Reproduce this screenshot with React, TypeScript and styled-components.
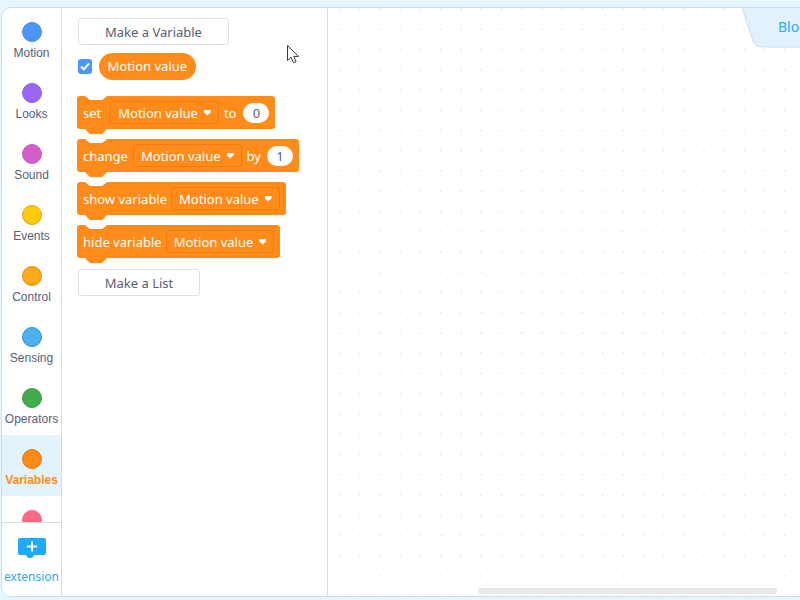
import React from "react";
import styled, { createGlobalStyle } from "styled-components";

const categories = [
  { name: "Motion", color: "#4c97f5", edge: "#4a90e8" },
  { name: "Looks", color: "#9966f5", edge: "#8f60e8" },
  { name: "Sound", color: "#cf5fcb", edge: "#c65ac2" },
  { name: "Events", color: "#ffcc0d", edge: "#ea9f0a" },
  { name: "Control", color: "#ffab19", edge: "#e8870f" },
  { name: "Sensing", color: "#4cb0ec", edge: "#2e93c9" },
  { name: "Operators", color: "#40ab4f", edge: "#389a40" },
  { name: "Variables", color: "#ff8c1a", edge: "#e6780f", active: true },
  { name: "My Blocks", color: "#ff6680", edge: "#ff6680" }
];

const GlobalStyle = createGlobalStyle`
  html, body {
    margin: 0;
    height: 100%;
    overflow: hidden;
    background: #e6f6fe;
    font-family: "Noto Sans", "Liberation Sans", sans-serif;
  }
`;

const Page = styled.div`
  width: 800px;
  height: 600px;
  overflow: hidden;
  padding: 7px 0 3px 1px;
  box-sizing: border-box;
`;

const Frame = styled.div`
  position: relative;
  display: flex;
  width: 820px;
  height: 590px;
  box-sizing: border-box;
  background: #fff;
  border: 1px solid #c5dff5;
  border-radius: 10px;
  overflow: hidden;
`;

const Sidebar = styled.aside`
  width: 59px;
  flex: none;
  display: flex;
  flex-direction: column;
  border-right: 1px solid #c5dff5;
`;

const CategoryList = styled.div`
  flex: 1;
  min-height: 0;
  overflow: hidden;
`;

const Category = styled.div<{ $active?: boolean }>`
  height: 61px;
  box-sizing: border-box;
  padding-top: 14px;
  display: flex;
  flex-direction: column;
  align-items: center;
  background: ${p => (p.$active ? "#e3f3fc" : "transparent")};
`;

const Dot = styled.span<{ $color: string; $edge: string }>`
  width: 20px;
  height: 20px;
  flex: none;
  box-sizing: border-box;
  border-radius: 50%;
  background: ${p => p.$color};
  border: 1px solid ${p => p.$edge};
`;

const CategoryName = styled.span<{ $active?: boolean }>`
  margin-top: 4px;
  font-family: "Liberation Sans", Arial, sans-serif;
  font-size: 12px;
  line-height: 14px;
  white-space: nowrap;
  color: ${p => (p.$active ? "#ff8c1a" : "#575e75")};
  font-weight: ${p => (p.$active ? "bold" : "normal")};
`;

const Extension = styled.div`
  height: 74px;
  flex: none;
  box-sizing: border-box;
  border-top: 1px solid #dddddd;
  padding-top: 15px;
  display: flex;
  flex-direction: column;
  align-items: center;
  background: #fff;
`;

const ExtensionName = styled.span`
  margin-top: 12px;
  font-size: 12px;
  line-height: 14px;
  color: #2ea8f5;
`;

const Flyout = styled.section`
  width: 266px;
  flex: none;
  box-sizing: border-box;
  padding: 10px 0 0 15px;
  border-right: 1px solid #c5dff5;
  display: flex;
  flex-direction: column;
  align-items: flex-start;
  background-image: radial-gradient(circle at 1px 1px, #fafafa 1px, transparent 1.2px);
  background-size: 20.25px 20.25px;
  background-position: 13.25px 0;
`;

const MakeButton = styled.div<{ $width: number }>`
  width: ${p => p.$width}px;
  height: 27px;
  margin-left: 1px;
  box-sizing: border-box;
  border: 1px solid #dddfe6;
  border-radius: 3px;
  background: #fff;
  color: #575e75;
  font-size: 13px;
  line-height: 26px;
  text-align: center;
`;

const ReporterRow = styled.div`
  display: flex;
  align-items: center;
  gap: 7px;
  margin: 8px 0 16px 1px;
`;

const Checkbox = styled.span`
  width: 14px;
  height: 15px;
  border-radius: 3px;
  background: #4c97ff;
  display: flex;
  align-items: center;
  justify-content: center;
`;

const Reporter = styled.div`
  height: 27px;
  padding: 0 8.5px;
  border-radius: 14px;
  background: #ff8c1a;
  color: #fff;
  font-size: 13px;
  line-height: 27px;
`;

const Stack = styled.div`
  display: flex;
  flex-direction: column;
  align-items: flex-start;
  gap: 10px;
  margin-bottom: 11px;
`;

const Block = styled.div`
  position: relative;
  height: 33px;
  box-sizing: border-box;
  padding: 0 6px;
  display: flex;
  align-items: center;
  gap: 5px;
  background: #ff8c1a;
  border-radius: 3px;
  color: #fff;
  font-size: 13px;
  white-space: nowrap;

  &::before {
    content: "";
    position: absolute;
    top: 0;
    left: 8px;
    width: 22px;
    height: 4px;
    background: #fff;
    clip-path: polygon(0 0, 100% 0, 78% 100%, 22% 100%);
  }

  &::after {
    content: "";
    position: absolute;
    top: 100%;
    left: 8px;
    width: 22px;
    height: 5px;
    background: #ff8c1a;
    clip-path: polygon(0 0, 100% 0, 78% 100%, 22% 100%);
  }
`;

const Word = styled.span<{ $after?: number }>`
  margin-right: ${p => p.$after ?? 0}px;
`;

const Dropdown = styled.span`
  height: 23px;
  box-sizing: border-box;
  padding: 0 7px;
  display: flex;
  align-items: center;
  gap: 6px;
  border: 1px solid #ed7d0e;
  border-radius: 3px;
`;

const Caret = styled.span`
  width: 7px;
  height: 6px;
  background: #fff;
  clip-path: polygon(0 12%, 25% 0, 50% 12%, 75% 0, 100% 12%, 100% 45%, 50% 100%, 0 45%);
`;

const NumberInput = styled.span`
  width: 26px;
  height: 20px;
  margin-left: 1px;
  border-radius: 10px;
  background: #fff;
  color: #575e75;
  font-size: 13px;
  line-height: 20px;
  text-align: center;
`;

const Workspace = styled.main`
  position: relative;
  flex: 1;
  background-color: #fff;
  background-image: radial-gradient(circle at 1px 1px, #eeeeee 1px, transparent 1.2px);
  background-size: 20.25px 20.25px;
  background-position: 10.5px 0;
`;

const TabShape = styled.svg`
  position: absolute;
  top: -1px;
  left: 414px;
`;

const TabLabel = styled.span`
  position: absolute;
  top: 10px;
  left: 450px;
  font-size: 14px;
  line-height: 18px;
  color: #2ea8f5;
`;

const Scrollbar = styled.div`
  position: absolute;
  left: 150px;
  bottom: 2px;
  width: 299px;
  height: 6px;
  border-radius: 3px;
  background: #e8e8e8;
`;

const Cursor = styled.svg`
  position: absolute;
  left: 284px;
  top: 36px;
`;

function Select() {
  return (
    <Dropdown>
      Motion value
      <Caret />
    </Dropdown>
  );
}

export default function App() {
  return (
    <Page>
      <GlobalStyle />
      <Frame>
        <Sidebar>
          <CategoryList>
            {categories.map(c => (
              <Category key={c.name} $active={c.active}>
                <Dot $color={c.color} $edge={c.edge} />
                <CategoryName $active={c.active}>{c.name}</CategoryName>
              </Category>
            ))}
          </CategoryList>
          <Extension>
            <svg width="28" height="20" viewBox="0 0 28 20">
              <path
                d="M2 0h24a2 2 0 0 1 2 2v13a2 2 0 0 1-2 2H16l-1 2q-1 1-3 1-2 0-3-1l-1-2H2a2 2 0 0 1-2-2V2a2 2 0 0 1 2-2z"
                fill="#1fa9ff"
              />
              <path d="M14 3.500v10M9 8.500h10" stroke="#fff" strokeWidth="2" />
            </svg>
            <ExtensionName>extension</ExtensionName>
          </Extension>
        </Sidebar>
        <Flyout>
          <MakeButton $width={151}>Make a Variable</MakeButton>
          <ReporterRow>
            <Checkbox>
              <svg width="10" height="9" viewBox="0 0 10 9">
                <path d="M1 4.500l2.800 2.800L9 1.500" fill="none" stroke="#fff" strokeWidth="2" />
              </svg>
            </Checkbox>
            <Reporter>Motion value</Reporter>
          </ReporterRow>
          <Stack>
            <Block>
              <Word $after={4}>set</Word>
              <Select />
              <Word $after={1}>to</Word>
              <NumberInput>0</NumberInput>
            </Block>
            <Block>
              <Word>change</Word>
              <Select />
              <Word>by</Word>
              <NumberInput>1</NumberInput>
            </Block>
            <Block>
              <Word $after={-1}>show variable</Word>
              <Select />
            </Block>
            <Block>
              <Word $after={-1}>hide variable</Word>
              <Select />
            </Block>
          </Stack>
          <MakeButton $width={122}>Make a List</MakeButton>
        </Flyout>
        <Workspace>
          <TabShape width="90" height="41" viewBox="0 0 90 41">
            <path d="M0 .5L11 34q2 6 9 6H90V.5z" fill="#e2f2fd" stroke="#c5dff5" />
          </TabShape>
          <TabLabel>Blocks</TabLabel>
          <Scrollbar />
        </Workspace>
        <Cursor width="16" height="22" viewBox="0 0 16 22">
          <path
            d="M1.500 1.500v15l3.600-3.200 2.400 5.500 2.600-1.100-2.400-5.300h4.800z"
            fill="#fff"
            stroke="#3a3a3a"
          />
        </Cursor>
      </Frame>
    </Page>
  );
}
